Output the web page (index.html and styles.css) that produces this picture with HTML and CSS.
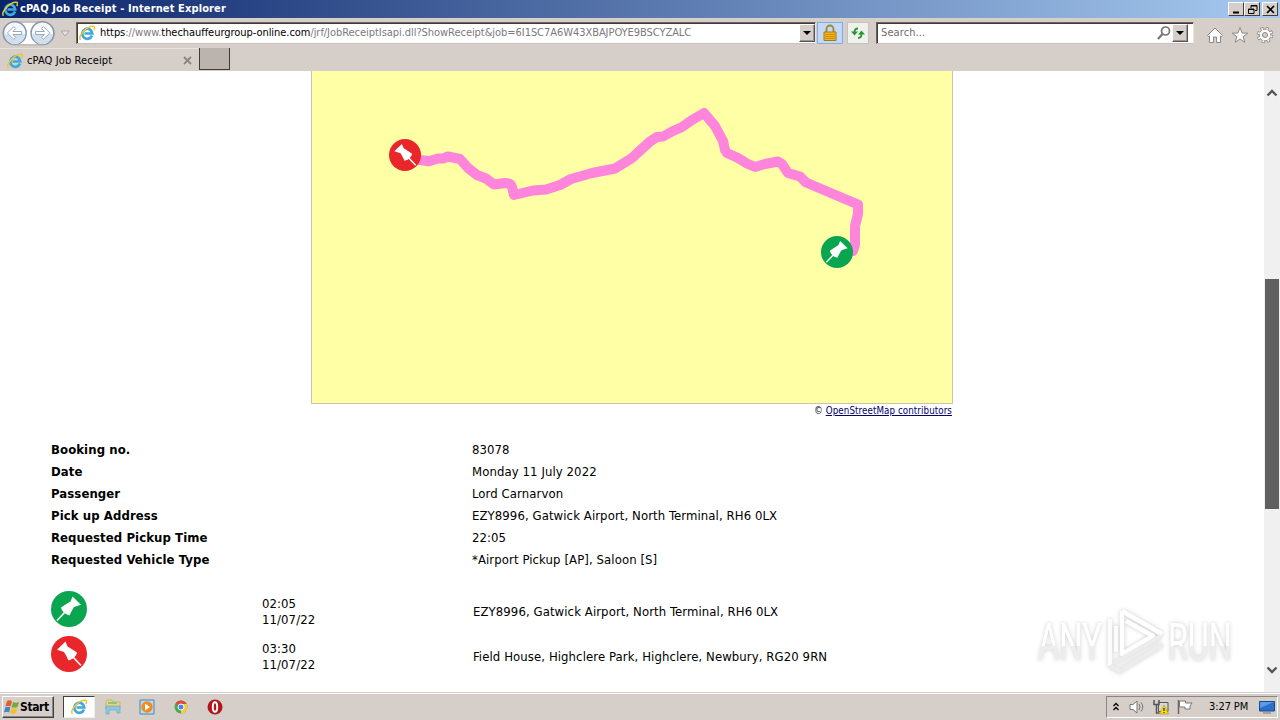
FILE: index.html
```html
<!DOCTYPE html>
<html lang="en">
  <head>
    <meta charset="utf-8">
    <title>cPAQ Job Receipt</title>
    <link rel="stylesheet" href="styles.css">
  </head>
  <body>
    <svg class="defs">
      <defs>
        <symbol id="ie" viewBox="0 0 16 16">
          <path d="M13 10.500A5 5 0 1 1 13.300 8.500H5.500" fill="none" stroke="#3fa9dc" stroke-width="2.700"/>
          <path d="M1.500 14.800C-1.500 11.500 8 .500 14.500 1.300c1.500.300 1 2.500.300 3.700" fill="none" stroke="#efc52c" stroke-width="1.500"/>
        </symbol>
        <symbol id="pin" viewBox="0 0 36 36">
          <path d="M14.500 5.500l2 5q3.500 2 9.500 6-.500 3-2.500 4.500-2 2.500-6 3.500-2.500-5.500-4.500-8.500L6 13.700z" fill="#fff"/>
          <path d="M22 21l8 8.500" stroke="#fff" stroke-width="1.600"/>
        </symbol>
        <symbol id="pickup" viewBox="0 0 36 36">
          <circle cx="18" cy="18" r="18" fill="#09a64f"/>
          <use href="#pin" width="36" height="36" transform="matrix(-1 0 0 1 36 0)"/>
        </symbol>
        <symbol id="dropoff" viewBox="0 0 36 36">
          <circle cx="18" cy="18" r="18" fill="#e9262a"/>
          <use href="#pin" width="36" height="36"/>
        </symbol>
      </defs>
    </svg>

    <header class="titlebar">
      <svg class="icon16"><use href="#ie"/></svg>
      <span class="title">cPAQ Job Receipt - Internet Explorer</span>
      <div class="winbtn"><svg viewBox="0 0 13 11"><path d="M3 8.500h6" stroke="#000" stroke-width="2"/></svg></div>
      <div class="winbtn"><svg viewBox="0 0 13 11"><path d="M5 4V1.500h6v5H9M5 2h6M2.500 5h5.500v4.500H2.500zM2 5.500h6" fill="none" stroke="#000"/></svg></div>
      <div class="winbtn close"><svg viewBox="0 0 13 11"><path d="M3 2l7 7M10 2L3 9" stroke="#000" stroke-width="1.700"/></svg></div>
    </header>

    <nav class="navbar">
      <svg class="history" viewBox="0 0 77 30">
        <rect x="3" y="4" width="52" height="23" rx="11" fill="#fdfdfd" stroke="#aaa7a5"/>
        <g fill="#f6f9fc" stroke="#8495aa" stroke-width="1.500">
          <circle cx="15" cy="15" r="11.500"/>
          <circle cx="43" cy="15" r="11.500"/>
        </g>
        <path d="M4.500 16a10.500 10.500 0 0 0 21 0zM32.500 16a10.500 10.500 0 0 0 21 0z" fill="#d2e0ed"/>
        <g fill="#fff" stroke="#8c9daf" stroke-width=".9">
          <path d="M7.500 15l6.500-6.500 2 2-3 3h9v3h-9l3 3-2 2z"/>
          <path d="M50.500 15L44 8.500l-2 2 3 3h-9v3h9l-3 3 2 2z"/>
        </g>
        <path d="M62 13h8l-4 5z" fill="#e8e4e1" stroke="#aaa5a1"/>
      </svg>
      <div class="field address">
        <svg class="icon16"><use href="#ie"/></svg>
        <span class="url"><b>https</b>://www.<b>thechauffeurgroup-online.com</b>/jrf/JobReceiptIsapi.dll?ShowReceipt&amp;job=6I1SC7A6W43XBAJPOYE9BSCYZALC</span>
        <div class="drop"></div>
      </div>
      <div class="tool lock">
        <svg viewBox="0 0 16 18"><path d="M4.500 8V5a3.500 3.500 0 0 1 7 0v3" fill="none" stroke="#a9822a" stroke-width="1.800"/><path d="M2 8h12v8.500H2z" fill="#f4b722" stroke="#a8780f"/><path d="M3 10.500h10M3 12.500h10M3 14.500h10" stroke="#c88b0e"/></svg>
      </div>
      <div class="tool refresh">
        <svg viewBox="0 0 16 18"><g fill="none" stroke="#2b9630" stroke-width="1.800"><path d="M8 4.500q-3.500 0-3.500 4"/><path d="M8 14q3.500 0 3.500-4"/></g><path d="M1 7.500h7L4.500 11.500zM8 10.500h7l-3.500-4z" fill="#2b9630"/></svg>
      </div>
      <div class="field search">
        <span>Search...</span>
        <svg class="icon16" viewBox="0 0 16 16"><circle cx="9.500" cy="6" r="4" fill="none" stroke="#777" stroke-width="1.700"/><path d="M6.500 9l-4.500 5" stroke="#777" stroke-width="2.200"/></svg>
        <div class="drop"></div>
      </div>
      <div class="commands">
        <svg viewBox="0 0 18 18"><path d="M1.500 9.500L9 2l7.500 7.500-1.200 1.200L14.500 10v6.500h-4V11h-3v5.500h-4V10l-.8.700z" fill="#fff" stroke="#8b8785"/></svg>
        <svg viewBox="0 0 18 18"><path d="M9 1.500l2 5.500 5.700.200-4.500 3.500 1.600 5.600L9 13l-4.800 3.300 1.600-5.600L1.300 7.200 7 7z" fill="#fff" stroke="#8b8785"/></svg>
        <svg viewBox="0 0 18 18"><circle cx="9" cy="9" r="6.500" fill="none" stroke="#8b8785" stroke-width="3.500" stroke-dasharray="2.800 2.305"/><circle cx="9" cy="9" r="5.900" fill="#fff" stroke="#8b8785"/><circle cx="9" cy="9" r="6.500" fill="none" stroke="#fff" stroke-width="2" stroke-dasharray="1.600 3.505" stroke-dashoffset="-.6"/><circle cx="9" cy="9" r="2.500" fill="#d6cec9" stroke="#8b8785"/></svg>
      </div>
    </nav>

    <div class="tabs">
      <div class="tab">
        <svg class="icon16"><use href="#ie"/></svg>
        <span>cPAQ Job Receipt</span>
        <svg class="tab-close" viewBox="0 0 9 9"><path d="M1 1l7 7M8 1L1 8" stroke="#8a8583" stroke-width="1.800"/></svg>
      </div>
      <div class="newtab"></div>
    </div>

    <div class="viewport">
      <main class="page">
        <div class="map">
          <svg viewBox="312 71 640 332">
            <path d="M405 157L420 160L429 161.300L438 158.500L443 158.500L448 156.500L460 159L468 168L477 175L486 178.500L494 184.500L505 183Q511 183 512 187L514 195L533 190.500L546 189.500L560 185L571 179L592 173L615 168.500L632 158L650 141.500L657 137L663 136.500L672 131.500L682 127L692 120L704 113L715 126L723 141L725 150L727 153L738 158L747 163.500L755 167L765 164L778 161.500L782 164L788 173L800 176.500L806 182.500L858 204.500L858 214L855 226L855 245L853 251" fill="none" stroke="#ff84dc" stroke-width="10" stroke-linecap="round" stroke-linejoin="round"/>
            <use href="#dropoff" x="389" y="139" width="32" height="32"/>
            <use href="#pickup" x="821" y="236" width="32" height="32"/>
          </svg>
        </div>
        <p class="credit">© <a href="#">OpenStreetMap contributors</a></p>
        <dl class="details">
          <dt>Booking no.</dt><dd>83078</dd>
          <dt>Date</dt><dd>Monday 11 July 2022</dd>
          <dt>Passenger</dt><dd>Lord Carnarvon</dd>
          <dt>Pick up Address</dt><dd>EZY8996, Gatwick Airport, North Terminal, RH6 0LX</dd>
          <dt>Requested Pickup Time</dt><dd>22:05</dd>
          <dt>Requested Vehicle Type</dt><dd>*Airport Pickup [AP], Saloon [S]</dd>
        </dl>
        <div class="stops">
          <div class="stop">
            <svg><use href="#pickup"/></svg>
            <div class="time">02:05<br>11/07/22</div>
            <div>EZY8996, Gatwick Airport, North Terminal, RH6 0LX</div>
          </div>
          <div class="stop">
            <svg><use href="#dropoff"/></svg>
            <div class="time">03:30<br>11/07/22</div>
            <div>Field House, Highclere Park, Highclere, Newbury, RG20 9RN</div>
          </div>
        </div>
        <svg class="watermark" viewBox="0 0 210 76">
          <defs>
            <linearGradient id="wm" x1="0" y1="0" x2="0" y2="1"><stop offset=".55" stop-color="#fff"/><stop offset=".56" stop-color="#ededed"/></linearGradient>
          </defs>
          <g fill="url(#wm)" transform="scale(.66 1)">
            <text x="12" y="57" textLength="97" lengthAdjust="spacingAndGlyphs">ANY</text>
            <text x="209" y="57" textLength="97" lengthAdjust="spacingAndGlyphs">RUN</text>
          </g>
          <g fill="none" stroke-width="4.500" stroke-linejoin="round">
            <path d="M80 16v47M86 23v26" stroke="#fcfcfc"/>
            <path d="M92 8l40 23M92 8v43l31-18L96 18" stroke="#fff"/>
            <path d="M86 59l45-26M92 66l40-24" stroke="#ececec"/>
            <path d="M80 63l12 6" stroke="#ececec"/>
          </g>
        </svg>
      </main>
      <div class="scrollbar">
        <svg viewBox="0 0 16 12"><path d="M3.500 8.500L8 4l4.500 4.500" fill="none" stroke="#555" stroke-width="2.300"/></svg>
        <div class="thumb"></div>
        <svg viewBox="0 0 16 12"><path d="M3.500 3.500L8 8l4.500-4.500" fill="none" stroke="#555" stroke-width="2.300"/></svg>
      </div>
    </div>

    <footer class="taskbar">
      <div class="start">
        <svg viewBox="0 0 16 16"><path d="M3 2q3-1.500 5 .5L6.500 7.500q-2-1.500-5 0z" fill="#e75b28"/><path d="M9 3q3 1.500 6 0l-1.500 5q-3 1.500-6 0z" fill="#72ad3a"/><path d="M1.300 8.500q3-1.500 5 0L5 13.500q-2-1.500-5 0z" fill="#3f83cd"/><path d="M7.300 9q3 1.500 6 0L12 14q-3 1.500-6 0z" fill="#f6bd2e"/></svg>
        <b>Start</b>
      </div>
      <div class="task active"><svg><use href="#ie"/></svg></div>
      <div class="task"><svg viewBox="0 0 16 16"><path d="M1 3l1-2h5l1 2h7v7H1z" fill="#ecd57a" stroke="#d3b654"/><path d="M3 3h9v2H3z" fill="#8bc18a"/><path d="M1 7h14v7h-3v-3H4v4H1z" fill="#8fc7e0" stroke="#68a9c8" stroke-width=".7"/></svg></div>
      <div class="task"><svg viewBox="0 0 16 16"><path d="M1 1h14v14H1z" fill="#b8d9ee" stroke="#4784b8"/><circle cx="8" cy="8" r="5.700" fill="#f48a1c"/><path d="M6 4.500l5 3.500-5 3.500z" fill="#fff"/></svg></div>
      <div class="task"><svg viewBox="0 0 16 16"><circle cx="8" cy="8" r="6.500" fill="#4aa852"/><path d="M8 8L2.400 4.700A6.500 6.500 0 0 1 13.700 5H8z" fill="#dd4b3e"/><path d="M8 8V5h5.700A6.500 6.500 0 0 1 8 14.500z" fill="#fbcb3c"/><circle cx="8" cy="8" r="3" fill="#4585e8" stroke="#fff"/></svg></div>
      <div class="task"><svg viewBox="0 0 16 16"><circle cx="8" cy="8" r="7.500" fill="#b3151b"/><ellipse cx="8" cy="8" rx="2.200" ry="4.800" fill="#b3151b" stroke="#fff" stroke-width="2"/></svg></div>
      <div class="tray">
        <svg class="chevrons" viewBox="0 0 8 12"><path d="M1.500 5L4 2.500 6.500 5M1.500 9L4 6.500 6.500 9" fill="none" stroke="#000" stroke-width="1.300"/></svg>
        <svg viewBox="0 0 16 16"><path d="M1 5.500h3L8 2v12l-4-3.500H1z" fill="#fff" stroke="#777"/><path d="M10 5q2 3 0 6M12 3.500q3.500 4.500 0 9" fill="none" stroke="#777"/></svg>
        <svg viewBox="0 0 16 16"><path d="M5.500 3.500H15v9H5.500z" fill="#d8d8d8" stroke="#555"/><path d="M1 1v4.500h5V1M3.500 5.500V14h3" fill="none" stroke="#555" stroke-width="1.500"/><path d="M11 6l4.500 9h-9z" fill="#ffe01a" stroke="#b79500" stroke-width=".7"/><path d="M11 9v3M11 13v1" stroke="#000"/></svg>
        <svg viewBox="0 0 16 16"><path d="M1.500 1v14" stroke="#666" stroke-width="1.500"/><path d="M2.500 2h6v2H15l-2 3 0 3H8V8H2.500z" fill="#fff" stroke="#777"/></svg>
        <span class="clock">3:27 PM</span>
        <svg class="desktop" viewBox="0 0 16 14"><path d="M.5 1.500h15V11H.5z" fill="#2a70ca" stroke="#164b8d"/><path d="M1 2h14L1 8z" fill="#5d9ce2"/><path d="M4 13h8" stroke="#777"/></svg>
      </div>
    </footer>
  </body>
</html>
```
FILE: styles.css
```css
* {
  box-sizing: border-box;
}

body {
  display: flex;
  flex-direction: column;
  width: 1280px;
  height: 720px;
  margin: 0;
  overflow: hidden;
  background: #d6cec9;
  font: 11px/14px "DejaVu Sans Condensed", "DejaVu Sans", sans-serif;
  color: #000;
  white-space: nowrap;
}

svg {
  display: block;
  flex: none;
}

.defs {
  position: absolute;
  width: 0;
  height: 0;
}

.icon16 {
  width: 16px;
  height: 16px;
}

.titlebar {
  display: flex;
  align-items: center;
  height: 18px;
  padding: 0 2px;
  background: linear-gradient(90deg, #0a246a, #a6caf0);
  color: #fff;
  font-weight: bold;
}

.title {
  flex: 1;
  margin-left: 2px;
  letter-spacing: 0.12px;
}

.winbtn {
  width: 16px;
  height: 14px;
  padding: 1px;
  background: #d6cec9;
  border: 1px solid;
  border-color: #fff #404040 #404040 #fff;
}

.winbtn svg {
  width: 13px;
  height: 11px;
}

.close {
  margin-left: 2px;
}

.navbar {
  display: flex;
  align-items: flex-start;
  height: 30px;
  border-top: 1px solid #d5d3c3;
}

.history {
  width: 76px;
  height: 30px;
  margin-top: -1px;
}

.field {
  display: flex;
  align-items: center;
  height: 22px;
  margin-top: 3px;
  background: #fff;
  border: 1px solid;
  border-color: #6d6462 #e9e4e0 #c9c0bb #6d6462;
  box-shadow: inset 1px 1px #403a3c;
}

.address {
  width: 740px;
  padding-left: 2px;
}

.url {
  flex: 1;
  margin-left: 5px;
  color: #7a7a7a;
  letter-spacing: -0.05px;
}

.url b {
  color: #000;
  font-weight: normal;
}

.drop {
  display: flex;
  align-items: center;
  justify-content: center;
  width: 16px;
  height: 18px;
  background: #d6cec9;
  border: 1px solid;
  border-color: #fff #555 #555 #fff;
  box-shadow: inset -1px -1px #999;
}

.drop::after {
  content: "";
  border: 4px solid transparent;
  border-top-color: #000;
  border-bottom: 0;
}

.tool {
  display: flex;
  align-items: center;
  justify-content: center;
  height: 22px;
  margin-top: 3px;
}

.tool svg {
  width: 16px;
  height: 18px;
}

.lock {
  width: 26px;
  margin-left: 1px;
  background: #c2daf8;
  border: 1px solid #85acdd;
}

.refresh {
  width: 22px;
  margin-left: 4px;
  background: #eef1ec;
  border: 1px solid #c6c2bd;
}

.search {
  width: 318px;
  margin-left: 7px;
  padding: 0 5px 0 4px;
  color: #6d6d6d;
}

.search span {
  flex: 1;
  letter-spacing: 0.1px;
}

.commands {
  display: flex;
  gap: 7px;
  margin: 7px 0 0 12px;
}

.commands svg {
  width: 18px;
  height: 18px;
}

.tabs {
  display: flex;
  height: 23px;
  border-bottom: 1px solid #d5d3c3;
}

.tab {
  display: flex;
  align-items: center;
  width: 199px;
  padding: 2px 7px 0;
  border-top: 1px solid #e8e2dd;
}

.tab span {
  flex: 1;
  margin-left: 4px;
  letter-spacing: 0.1px;
}

.tab-close {
  width: 9px;
  height: 9px;
}

.newtab {
  width: 31px;
  background: #bbb3ae;
  border: solid #3f3b3a;
  border-width: 0 1px 1px;
}

.viewport {
  display: flex;
  height: 621px;
  background: #fff;
}

.page {
  position: relative;
  width: 1264px;
  font-size: 13px;
  line-height: 16px;
  letter-spacing: 0.09px;
}

.map {
  width: 642px;
  height: 333px;
  margin-left: 311px;
  background: #ffffa6;
  border: 1px solid #c6c6a6;
  border-top: 0;
}

.map svg {
  width: 640px;
  height: 332px;
}

.credit {
  width: 641px;
  margin: 1px 0 0 311px;
  font-size: 9.7px;
  line-height: 12px;
  text-align: right;
}

.credit a {
  color: #00006e;
}

.details {
  display: grid;
  grid-template-columns: 421px 1fr;
  grid-auto-rows: 22px;
  align-items: center;
  margin: 22px 0 0 51px;
}

.details dt {
  font-weight: bold;
}

.details dd {
  margin: 0;
}

.stops {
  display: grid;
  gap: 9px;
  margin: 19px 0 0 51px;
}

.stop {
  display: grid;
  grid-template-columns: 211px 211px 1fr;
  align-items: center;
  height: 36px;
}

.stop svg {
  width: 36px;
  height: 36px;
}

.time {
  margin-top: 6px;
}

.stop div:last-child {
  margin-top: 6px;
}

.watermark {
  position: absolute;
  top: 532px;
  left: 1030px;
  width: 210px;
  height: 76px;
  overflow: visible;
  letter-spacing: 0;
  filter: drop-shadow(0 0 2px rgba(0, 0, 0, 0.2));
}

.watermark text {
  font: 51px Roboto, sans-serif;
}

.scrollbar {
  display: flex;
  flex-direction: column;
  width: 16px;
  padding: 16px 0;
  background: #f0f0f0;
}

.scrollbar svg {
  width: 16px;
  height: 12px;
}

.thumb {
  width: 14px;
  height: 231px;
  margin: 180px 1px 155px;
  background: #606060;
}

.taskbar {
  display: flex;
  align-items: center;
  height: 28px;
  padding: 1px 2px 1px;
  border-top: 1px solid #d6d4c8;
  box-shadow: inset 0 1px #fff;
}

.start {
  display: flex;
  align-items: center;
  width: 52px;
  height: 22px;
  padding-left: 1px;
  border: 1px solid;
  border-color: #fff #404040 #404040 #fff;
  box-shadow: inset -1px -1px #8b8583;
}

.start svg {
  width: 16px;
  height: 16px;
}

.start b {
  font-size: 12px;
  letter-spacing: -0.4px;
}

.task {
  display: flex;
  align-items: center;
  justify-content: center;
  width: 34px;
  height: 22px;
}

.task svg {
  width: 16px;
  height: 16px;
}

.active {
  width: 32px;
  margin: 0 1px 0 9px;
  background: #fff;
  border: 1px solid;
  border-color: #404040 #eee #eee #404040;
}

.tray {
  display: flex;
  align-items: center;
  width: 172px;
  height: 22px;
  margin-left: auto;
  padding-left: 5px;
  border: 1px solid;
  border-color: #8b8583 #fff #fff #8b8583;
}

.tray svg {
  width: 16px;
  height: 16px;
  margin-right: 8px;
}

.tray .chevrons {
  width: 8px;
  height: 14px;
  margin-right: 9px;
}

.clock {
  width: 42px;
  margin-left: 8px;
  letter-spacing: -0.1px;
}

.tray .desktop {
  margin: 0 0 0 8px;
}
```
